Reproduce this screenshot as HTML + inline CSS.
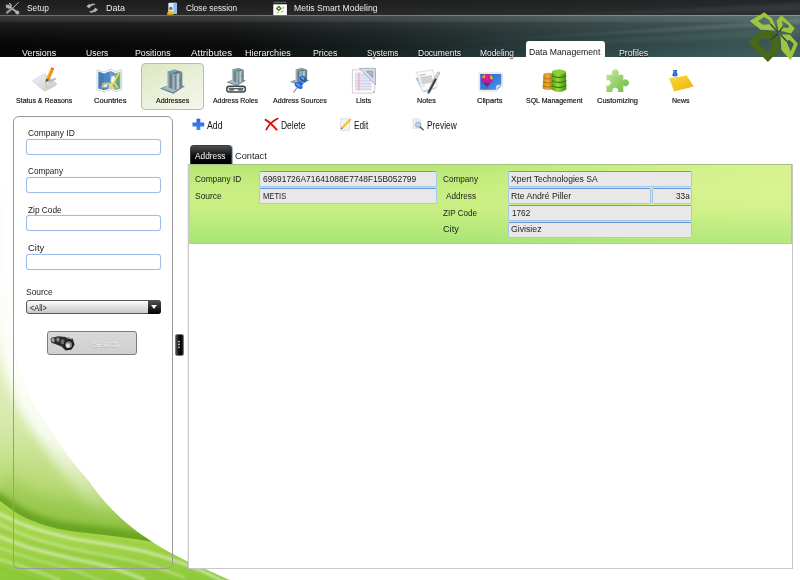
<!DOCTYPE html>
<html>
<head>
<meta charset="utf-8">
<title>Metis Smart Modeling</title>
<style>
html,body{margin:0;padding:0;}
body{width:800px;height:580px;overflow:hidden;position:relative;background:#fff;font-family:"Liberation Sans","DejaVu Sans",sans-serif;font-size:9px;color:#222;}
.t{position:absolute;display:block;white-space:nowrap;line-height:1;transform-origin:0 50%;color:#222;}
.tt{color:#ececec;}
.tab{color:#f4f4f4;text-shadow:0 1px 1px #000;}
.tabs{color:#111;}
.tl{color:#1a1a1a;-webkit-text-stroke:.2px #1a1a1a;}
.sr{color:#f7f7f3;text-shadow:0 1px 0 #b4b4aa,0 0 1px #aaa;}
.tb{color:#111;}
.at{color:#fff;}
#swoosh{position:absolute;left:0;top:0;width:800px;height:580px;}
#topbar{position:absolute;left:0;top:0;width:800px;height:16px;background:linear-gradient(90deg,rgba(0,0,0,0) 40%,rgba(60,80,80,.22) 100%),linear-gradient(#1c1c1c,#2a2a2a);}
#header{position:absolute;left:0;top:15px;width:800px;height:42px;
 background:
  linear-gradient(180deg,rgba(255,255,255,.42) 0px,rgba(255,255,255,.42) 1px,rgba(255,255,255,.22) 1.2px,rgba(255,255,255,.16) 7px,rgba(255,255,255,.10) 7.5px,rgba(255,255,255,.04) 20px,rgba(255,255,255,0) 32px),
  linear-gradient(180deg,rgba(0,0,0,.28) 0,rgba(0,0,0,.22) 40%,rgba(0,0,0,0) 100%),
  linear-gradient(90deg,#060606 0%,#0a0b0b 28%,#1a2424 48%,#2f4747 72%,#426464 100%);}
#tabsel{position:absolute;left:526px;top:41px;width:79px;height:17px;background:#fff;border-radius:3px 3px 0 0;}
#selbox{position:absolute;left:141px;top:63px;width:61px;height:45px;background:linear-gradient(155deg,#dbe7c0 0%,#e9f0d8 50%,#f5f7ee 100%);border:1px solid #b9bbb4;border-radius:4px;}
#lpanel{position:absolute;left:13px;top:116px;width:158px;height:451px;border:1px solid #9a9a9a;border-radius:6px;}
.li{position:absolute;left:26px;width:133px;height:14px;border:1px solid #9dbde8;border-radius:3px;background:#fff;box-shadow:0 0 1px #bcd3f2;}
#lsel{position:absolute;left:26px;top:300px;width:133px;height:12px;border:1px solid #555;border-radius:3px;background:linear-gradient(#fdfdfd,#dcdcdc 60%,#c8c8c8);}
#lsel i{position:absolute;right:-1px;top:-1px;width:13px;height:14px;background:linear-gradient(#555,#000);border-radius:0 3px 3px 0;}
#lsel i:after{content:"";position:absolute;left:3px;top:5px;border:3.5px solid transparent;border-top:4px solid #fff;border-bottom:0;}
#sbtn{position:absolute;left:47px;top:331px;width:88px;height:22px;border:1px solid #7c7c7c;border-radius:3px;background:linear-gradient(#d9d9d9,#cfcfcf);}
#split{position:absolute;left:175px;top:334px;width:7px;height:20px;border:1px solid #7a7a7a;background:linear-gradient(90deg,#4a4a4a,#0c0c0c 45%,#000 70%,#2a2a2a);border-radius:2px;}
#main{position:absolute;left:188px;top:164px;width:603px;height:404px;background:#fff;border:1px solid #c8c8c8;border-top:none;box-shadow:-1px 0 1px rgba(0,0,0,.06);}
#atab{position:absolute;left:190px;top:145px;width:40px;height:19px;background:linear-gradient(#4e4e4e,#2a2a2a 30%,#0a0a0a 55%,#000);border:1px solid #3c3c3c;border-bottom:none;border-radius:4px 4px 0 0;box-shadow:1px 0 0 rgba(120,145,165,.7);}
#green{position:absolute;left:189px;top:164px;width:603px;height:80px;border-top:1px solid #a6c27e;border-left:1px solid #b9e088;border-right:1px solid #a4d66a;border-bottom:1px solid #a2dc72;box-sizing:border-box;
 background:radial-gradient(ellipse 340px 62px at 100% 0%,rgba(232,247,160,.62) 0%,rgba(232,247,160,0) 100%),linear-gradient(90deg,rgba(255,255,170,0) 40%,rgba(240,250,160,.18) 100%),linear-gradient(180deg,#b5e774 0%,#c1eb7c 18%,#caef83 38%,#c8ee82 58%,#b5e97b 82%,#a8e475 100%);}
.gi{position:absolute;height:14px;border:1px solid #a6c6ec;border-top-color:#6698d6;border-radius:2px;background:#e8e8e8;}
</style>
</head>
<body>
<svg id="swoosh" viewBox="0 0 800 580">
<defs>
<linearGradient id="gLow" x1="0" y1="500" x2="0" y2="580" gradientUnits="userSpaceOnUse">
<stop offset="0" stop-color="#a9d852"/><stop offset=".5" stop-color="#a4d54c"/><stop offset="1" stop-color="#8ec93a"/></linearGradient>
<linearGradient id="gUp" x1="0" y1="120" x2="0" y2="545" gradientUnits="userSpaceOnUse">
<stop offset="0" stop-color="#ffffff"/><stop offset=".25" stop-color="#f3f8e2"/><stop offset=".55" stop-color="#e6f1c8"/><stop offset=".72" stop-color="#d6e9a8"/><stop offset=".86" stop-color="#b8da76"/><stop offset="1" stop-color="#8cc23c"/></linearGradient>
<linearGradient id="gHi" x1="0" y1="300" x2="0" y2="520" gradientUnits="userSpaceOnUse"><stop offset="0" stop-color="#fff" stop-opacity=".9"/><stop offset=".6" stop-color="#fff" stop-opacity=".85"/><stop offset="1" stop-color="#fff" stop-opacity="0"/></linearGradient>
<filter id="b5" filterUnits="userSpaceOnUse" x="-60" y="60" width="400" height="560"><feGaussianBlur stdDeviation="5"/></filter>
<filter id="b3" filterUnits="userSpaceOnUse" x="-60" y="60" width="400" height="560"><feGaussianBlur stdDeviation="3"/></filter>
<filter id="b8" filterUnits="userSpaceOnUse" x="-60" y="60" width="400" height="560"><feGaussianBlur stdDeviation="8"/></filter>
<filter id="b1" filterUnits="userSpaceOnUse" x="-60" y="60" width="400" height="560"><feGaussianBlur stdDeviation="1.2"/></filter>
<clipPath id="cP"><path d="M0.0,120.0 C0.2,128.3 0.5,153.3 1.0,170.0 C1.5,186.7 2.2,203.3 3.0,220.0 C3.8,236.7 4.5,254.2 5.6,270.0 C6.7,285.8 7.5,300.0 9.4,315.0 C11.3,330.0 13.1,345.8 16.8,360.0 C20.5,374.2 25.9,388.3 31.5,400.0 C37.1,411.7 44.4,420.7 50.5,430.0 C56.6,439.3 62.2,448.2 68.0,456.0 C73.8,463.8 79.5,469.6 85.0,476.5 C90.5,483.4 95.6,491.1 101.0,497.5 C106.4,503.9 111.8,509.6 117.5,515.0 C123.2,520.4 129.2,525.5 135.0,530.0 C140.8,534.5 146.7,538.2 152.5,542.0 C158.3,545.8 164.2,549.4 170.0,552.6 C175.8,555.8 181.7,558.7 187.5,561.4 C193.3,564.1 198.0,565.9 205.0,569.0 C212.0,572.1 225.4,578.2 229.5,580.0 L229.5,590 L-10,590 L-10,120 Z"/></clipPath>
<clipPath id="cU"><path d="M0.0,120.0 C0.2,128.3 0.5,153.3 1.0,170.0 C1.5,186.7 2.2,203.3 3.0,220.0 C3.8,236.7 4.5,254.2 5.6,270.0 C6.7,285.8 7.5,300.0 9.4,315.0 C11.3,330.0 13.1,345.8 16.8,360.0 C20.5,374.2 25.9,388.3 31.5,400.0 C37.1,411.7 44.4,420.7 50.5,430.0 C56.6,439.3 62.2,448.2 68.0,456.0 C73.8,463.8 79.5,469.6 85.0,476.5 C90.5,483.4 95.6,491.1 101.0,497.5 C106.4,503.9 111.8,509.6 117.5,515.0 C123.2,520.4 129.2,525.5 135.0,530.0 C140.8,534.5 149.6,540.0 152.5,542.0 C149.6,541.5 140.4,539.8 135.0,539.0 C129.6,538.2 125.8,537.8 120.0,537.0 C114.2,536.2 106.2,535.2 100.0,534.5 C93.8,533.8 89.3,533.3 83.0,532.5 C76.7,531.7 69.0,530.9 62.0,529.5 C55.0,528.1 48.0,526.4 41.0,524.0 C34.0,521.6 26.8,518.8 20.0,515.0 C13.2,511.2 4.2,503.8 0.0,501.0 C-4.2,498.2 -4.2,498.5 -5.0,498.0 L-10,498 L-10,120 Z"/></clipPath>
</defs>
<g clip-path="url(#cP)">
<rect x="-10" y="480" width="260" height="110" fill="url(#gLow)"/>
<g filter="url(#b1)">
<path d="M-5.0,512.0 C0.8,514.5 17.5,522.7 30.0,527.0 C42.5,531.3 56.7,535.0 70.0,538.0 C83.3,541.0 96.7,542.5 110.0,545.0 C123.3,547.5 136.7,549.5 150.0,553.0 C163.3,556.5 177.5,561.2 190.0,566.0 C202.5,570.8 219.2,579.3 225.0,582.0" fill="none" stroke="#fff" stroke-width="3.0" stroke-opacity="0.45"/>
<path d="M-5.0,522.0 C0.8,524.5 17.5,532.7 30.0,537.0 C42.5,541.3 56.7,544.8 70.0,548.0 C83.3,551.2 96.7,553.2 110.0,556.0 C123.3,558.8 137.5,561.3 150.0,565.0 C162.5,568.7 179.2,575.8 185.0,578.0" fill="none" stroke="#fff" stroke-width="2.0" stroke-opacity="0.35"/>
<path d="M-5.0,535.0 C0.8,537.2 17.5,544.2 30.0,548.0 C42.5,551.8 56.7,554.8 70.0,558.0 C83.3,561.2 97.5,563.3 110.0,567.0 C122.5,570.7 139.2,577.8 145.0,580.0" fill="none" stroke="#fff" stroke-width="3.5" stroke-opacity="0.40"/>
<path d="M-5.0,546.0 C0.8,548.0 17.5,554.2 30.0,558.0 C42.5,561.8 57.5,565.0 70.0,569.0 C82.5,573.0 99.2,579.8 105.0,582.0" fill="none" stroke="#fff" stroke-width="2.0" stroke-opacity="0.30"/>
<path d="M-5.0,558.0 C0.8,559.8 19.2,565.3 30.0,569.0 C40.8,572.7 55.0,578.2 60.0,580.0" fill="none" stroke="#fff" stroke-width="3.0" stroke-opacity="0.30"/>
<path d="M-5.0,505.0 C0.8,507.7 17.5,516.5 30.0,521.0 C42.5,525.5 56.7,529.0 70.0,532.0 C83.3,535.0 96.7,536.5 110.0,539.0 C123.3,541.5 136.7,543.5 150.0,547.0 C163.3,550.5 176.8,554.5 190.0,560.0 C203.2,565.5 222.5,576.7 229.0,580.0" fill="none" stroke="#86c030" stroke-width="2.5" stroke-opacity="0.25"/>
<path d="M-5.0,528.0 C0.8,530.3 17.5,537.8 30.0,542.0 C42.5,546.2 56.7,549.8 70.0,553.0 C83.3,556.2 96.7,558.0 110.0,561.0 C123.3,564.0 139.2,567.5 150.0,571.0 C160.8,574.5 170.8,580.2 175.0,582.0" fill="none" stroke="#86c030" stroke-width="3.0" stroke-opacity="0.30"/>
<path d="M-5.0,567.0 C0.8,568.8 22.5,575.5 30.0,578.0 C37.5,580.5 38.3,581.3 40.0,582.0" fill="none" stroke="#7cbc2c" stroke-width="4.0" stroke-opacity="0.30"/>
</g>
</g>
<g clip-path="url(#cU)">
<path d="M0.0,120.0 C0.2,128.3 0.5,153.3 1.0,170.0 C1.5,186.7 2.2,203.3 3.0,220.0 C3.8,236.7 4.5,254.2 5.6,270.0 C6.7,285.8 7.5,300.0 9.4,315.0 C11.3,330.0 13.1,345.8 16.8,360.0 C20.5,374.2 25.9,388.3 31.5,400.0 C37.1,411.7 44.4,420.7 50.5,430.0 C56.6,439.3 62.2,448.2 68.0,456.0 C73.8,463.8 79.5,469.6 85.0,476.5 C90.5,483.4 95.6,491.1 101.0,497.5 C106.4,503.9 111.8,509.6 117.5,515.0 C123.2,520.4 129.2,525.5 135.0,530.0 C140.8,534.5 149.6,540.0 152.5,542.0 C149.6,541.5 140.4,539.8 135.0,539.0 C129.6,538.2 125.8,537.8 120.0,537.0 C114.2,536.2 106.2,535.2 100.0,534.5 C93.8,533.8 89.3,533.3 83.0,532.5 C76.7,531.7 69.0,530.9 62.0,529.5 C55.0,528.1 48.0,526.4 41.0,524.0 C34.0,521.6 26.8,518.8 20.0,515.0 C13.2,511.2 4.2,503.8 0.0,501.0 C-4.2,498.2 -4.2,498.5 -5.0,498.0 L-10,498 L-10,120 Z" fill="url(#gUp)"/>
<path d="M-5.0,498.0 C-4.2,498.5 -4.2,498.2 0.0,501.0 C4.2,503.8 13.2,511.2 20.0,515.0 C26.8,518.8 34.0,521.6 41.0,524.0 C48.0,526.4 55.0,528.1 62.0,529.5 C69.0,530.9 76.7,531.7 83.0,532.5 C89.3,533.3 93.8,533.8 100.0,534.5 C106.2,535.2 114.2,536.2 120.0,537.0 C125.8,537.8 129.6,538.2 135.0,539.0 C140.4,539.8 149.6,541.5 152.5,542.0" fill="none" stroke="#80ba2e" stroke-width="44" stroke-opacity=".38" filter="url(#b8)" transform="translate(0,-6)"/>
<path d="M-5.0,498.0 C-4.2,498.5 -4.2,498.2 0.0,501.0 C4.2,503.8 13.2,511.2 20.0,515.0 C26.8,518.8 34.0,521.6 41.0,524.0 C48.0,526.4 55.0,528.1 62.0,529.5 C69.0,530.9 76.7,531.7 83.0,532.5 C89.3,533.3 93.8,533.8 100.0,534.5 C106.2,535.2 114.2,536.2 120.0,537.0 C125.8,537.8 129.6,538.2 135.0,539.0 C140.4,539.8 149.6,541.5 152.5,542.0" fill="none" stroke="#5f9c1a" stroke-width="11" stroke-opacity=".85" filter="url(#b3)" transform="translate(0,-2)"/>
<path d="M0.0,120.0 C0.2,128.3 0.5,153.3 1.0,170.0 C1.5,186.7 2.2,203.3 3.0,220.0 C3.8,236.7 4.5,254.2 5.6,270.0 C6.7,285.8 7.5,300.0 9.4,315.0 C11.3,330.0 13.1,345.8 16.8,360.0 C20.5,374.2 25.9,388.3 31.5,400.0 C37.1,411.7 44.4,420.7 50.5,430.0 C56.6,439.3 62.2,448.2 68.0,456.0 C73.8,463.8 79.5,469.6 85.0,476.5 C90.5,483.4 95.6,491.1 101.0,497.5 C106.4,503.9 111.8,509.6 117.5,515.0 C123.2,520.4 129.2,525.5 135.0,530.0 C140.8,534.5 146.7,538.2 152.5,542.0 C158.3,545.8 164.2,549.4 170.0,552.6 C175.8,555.8 181.7,558.7 187.5,561.4 C193.3,564.1 198.0,565.9 205.0,569.0 C212.0,572.1 225.4,578.2 229.5,580.0" fill="none" stroke="url(#gHi)" stroke-width="30" filter="url(#b5)"/>
</g>
</svg>
<div id="topbar"></div>
<div id="header"></div>
<svg id="streaks" style="position:absolute;left:0;top:0" width="800" height="57" viewBox="0 0 800 57">
<defs><filter id="sb" filterUnits="userSpaceOnUse" x="0" y="0" width="800" height="57"><feGaussianBlur stdDeviation="1.2"/></filter>
<linearGradient id="sg" x1="380" y1="0" x2="800" y2="0" gradientUnits="userSpaceOnUse"><stop offset="0" stop-color="#cfe0e0" stop-opacity="0"/><stop offset=".5" stop-color="#cfe0e0" stop-opacity=".5"/><stop offset="1" stop-color="#cfe0e0" stop-opacity="1"/></linearGradient></defs>
<g filter="url(#sb)" fill="url(#sg)">
<path d="M800,19 L800,25 L440,43 Z" fill-opacity=".16"/>
<path d="M800,27 L800,36 L400,52 Z" fill-opacity=".08"/>
<path d="M800,3 L800,10 L540,15.5 Z" fill-opacity=".07"/>
</g></svg>
<div id="tabsel"></div>
<svg style="position:absolute;left:740px;top:5px" width="60" height="60" viewBox="740 5 60 60">
<path fill="#9cc63c" fill-rule="evenodd" d="M749.8,21 L764.3,12.2 L772.1,18.4 L777.4,31.6 L774.5,30.4 L760.7,29.8 Z M758.1,21 L764.3,16.9 L769.5,20.5 L771,24.3 L762.8,24.7 Z"/>
<path fill="#9cc63c" fill-rule="evenodd" d="M776.7,20.5 L781.4,15.3 L788.6,22.1 L794.8,28.3 L791.2,33.4 L781.4,30.9 L778.6,31.8 Z M781.9,20.5 L789.1,25.7 L787.6,28.3 L782.9,26.7 Z"/>
<path fill="#476915" fill-rule="evenodd" d="M748.3,42.2 L760.7,31.4 L774.1,32.4 L777.8,34.2 L779.8,49.5 L767.9,61.9 Z M757.1,42.8 L762.2,38.1 L771,39.1 L772.1,47.4 L767.4,52.6 Z"/>
<path fill="#9cc63c" fill-rule="evenodd" d="M780.3,34.5 L789.7,34.5 L797.9,43.8 L790.7,60.3 L781.4,50 Z M786.6,41.7 L789.1,39.7 L793.8,43.8 L790.7,51.6 Z"/>
<g stroke="#2e4243" stroke-width="1.4" fill="none" stroke-linecap="butt">
<path d="M770.6,24.2 L778,32.2"/><path d="M783,26.6 L779,32"/><path d="M771.2,39.4 L778,33.6"/><path d="M787,41.4 L780.6,34.8"/>
</g>
</svg>

<div id="selbox"></div>
<div id="lpanel"></div>
<div class="li" style="top:139px"></div>
<div class="li" style="top:177px"></div>
<div class="li" style="top:215px"></div>
<div class="li" style="top:254px"></div>
<div id="lsel"><i></i></div>
<div id="sbtn"></div>
<div id="split"></div>
<div id="main"></div>
<div id="atab"></div>
<div id="green"></div>
<div class="gi" style="left:259px;top:171px;width:176px"></div>
<div class="gi" style="left:259px;top:188px;width:176px"></div>
<div class="gi" style="left:508px;top:171px;width:182px"></div>
<div class="gi" style="left:508px;top:188px;width:141px"></div>
<div class="gi" style="left:652px;top:188px;width:38px"></div>
<div class="gi" style="left:508px;top:205px;width:182px"></div>
<div class="gi" style="left:508px;top:222px;width:182px"></div>
<svg id="icons" style="position:absolute;left:0;top:0" width="800" height="580" viewBox="0 0 800 580">
<defs>
<linearGradient id="gSteel" x1="0" y1="0" x2="1" y2="0"><stop offset="0" stop-color="#dfe5e8"/><stop offset=".3" stop-color="#7d929b"/><stop offset=".55" stop-color="#5f7883"/><stop offset=".8" stop-color="#a9b7bd"/><stop offset="1" stop-color="#8a9da5"/></linearGradient>
<linearGradient id="gPad" x1="0" y1="0" x2="1" y2="1"><stop offset="0" stop-color="#f4f6f8"/><stop offset="1" stop-color="#bcc6cf"/></linearGradient>
<linearGradient id="gPuz" x1="0" y1="0" x2="1" y2="1"><stop offset="0" stop-color="#c6e9a8"/><stop offset="1" stop-color="#6cba36"/></linearGradient>
<linearGradient id="gNote" x1="0" y1="0" x2="1" y2="1"><stop offset="0" stop-color="#fbd83a"/><stop offset="1" stop-color="#e9b50e"/></linearGradient>
<linearGradient id="gGreenCyl" x1="0" y1="0" x2="1" y2="0"><stop offset="0" stop-color="#55a012"/><stop offset=".4" stop-color="#9ad63e"/><stop offset="1" stop-color="#478e0e"/></linearGradient>
<linearGradient id="gOrCyl" x1="0" y1="0" x2="1" y2="0"><stop offset="0" stop-color="#cf8616"/><stop offset=".45" stop-color="#e8ac3c"/><stop offset="1" stop-color="#bf7a12"/></linearGradient>
<linearGradient id="gSky" x1="0" y1="0" x2="1" y2="1"><stop offset="0" stop-color="#1f62d2"/><stop offset="1" stop-color="#4a98e6"/></linearGradient>
<linearGradient id="gPlus" x1="0" y1="0" x2="0" y2="1"><stop offset="0" stop-color="#2a5fe0"/><stop offset="1" stop-color="#3f8cf2"/></linearGradient>
<filter id="ib" filterUnits="userSpaceOnUse" x="0" y="0" width="800" height="140"><feGaussianBlur stdDeviation=".35"/></filter>

</defs>
<g filter="url(#ib)">
<!-- Status & Reasons -->
<path d="M32.4,80.9 Q33,79.6 45,73.7 L57,84 Q56.6,85.6 44.5,91.2 Z" fill="url(#gPad)" stroke="#c3ccd4" stroke-width=".6"/>
<path d="M48,80.5 L55.5,77.8 L56.5,79.6 L49,82.4 Z" fill="#a9aeb4" fill-opacity=".8"/>
<path d="M45.6,82.2 L46.2,78.6 L50.6,68.6 L53.6,69.9 L49.2,79.9 Z" fill="#f6b21c"/>
<path d="M47.6,79.2 L52,69.2 L53.6,69.9 L49.2,79.9 Z" fill="#e88a12"/>
<path d="M50.6,68.6 L51.3,67.2 L54.2,68.5 L53.6,69.9 Z" fill="#d8572a"/>
<path d="M45.6,82.2 L46.2,78.6 L49.2,79.9 Z" fill="#5a4a30"/>
<path d="M45.6,82.4 L46.8,88.5" stroke="#e8b84a" stroke-width=".9" stroke-opacity=".7"/>
<!-- Countries -->
<path d="M97,70 L104,72 L111,69.4 L116,71.6 L121.6,69.6 L121.6,89.6 L116,91.6 L111,89.6 L104,91.8 L97,89.8 Z" fill="#fff" stroke="#c9c9c9" stroke-width=".8"/>
<path d="M98.3,71.6 L104,73.4 L104,90.2 L98.3,88.4 Z" fill="#3f7fb9"/>
<path d="M104,73.4 L110.6,71 L110.6,88.2 L104,90.2 Z" fill="#4b8ac3"/>
<path d="M110.6,71 L115.8,73.2 L115.8,90 L110.6,88.2 Z" fill="#5b9bd2"/>
<path d="M111.4,76.6 L114.2,75.4 L115.6,78.8 L113,84.4 L111,82 Z" fill="#eef4f8"/>
<path d="M115.8,73.2 L120.4,71.4 L120.4,88.4 L115.8,90 Z" fill="#6fae74"/>
<path d="M103.4,84.4 L108,84 L107,87.2 L103,87.6 Z" fill="#e4e8ee"/>
<path d="M101.6,88.6 L103,83.4 L108.8,83 L110.6,86.4" fill="none" stroke="#e3b64a" stroke-width="1.4"/>
<path d="M109,84.6 L114.4,88.8 M108.6,88.4 L112.6,84.4" stroke="#f0e060" stroke-width="2"/>
<path d="M118,74 Q116.6,80 118.6,86" fill="none" stroke="#4b8ac3" stroke-width=".8"/>
<path d="M119.4,72.4 L113.6,82.6 L108.6,85.4 M113.6,82.6 L117.6,87.6" fill="none" stroke="#efe05a" stroke-width="1.6"/>
<!-- Addresses -->
<g transform="translate(160,69.2)">
 <path d="M0,19.4 L10,15.2 L25,16.8 L13.4,24.6 Z" fill="#4f7686"/>
 <path d="M1.6,19.1 L10,15.8 L23.2,17 L13.3,23.2 Z" fill="#a4b8c1"/>
 <path d="M6.6,2.8 L15,5.6 L15,20.8 L6.6,17.6 Z" fill="url(#gSteel)"/>
 <path d="M15,5.6 L22.3,2.7 L22.3,18.2 L15,20.8 Z" fill="#6d858f"/>
 <path d="M16.6,5 L19.4,3.9 L19.4,19.2 L16.6,20.2 Z" fill="#d3dadd" fill-opacity=".8"/>
 <path d="M6.6,2.8 L14.6,0.3 L22.3,2.7 L15,5.6 Z" fill="#56808f"/>
 <path d="M8.6,2.7 L14.6,0.9 L18,2 L12,3.9 Z" fill="#86a5b0"/>
 <rect x="19" y="10" width="1.6" height="2.4" fill="#4f86b0"/>
</g>
<!-- Address Roles -->
<g transform="translate(226.6,67.8) scale(.77,.74)">
 <path d="M0,19.4 L10,15.2 L25,16.8 L13.4,24.6 Z" fill="#4f7686"/>
 <path d="M1.6,19.1 L10,15.8 L23.2,17 L13.3,23.2 Z" fill="#a4b8c1"/>
 <path d="M6.6,2.8 L15,5.6 L15,20.8 L6.6,17.6 Z" fill="url(#gSteel)"/>
 <path d="M15,5.6 L22.3,2.7 L22.3,18.2 L15,20.8 Z" fill="#6d858f"/>
 <path d="M16.6,5 L19.4,3.9 L19.4,19.2 L16.6,20.2 Z" fill="#d3dadd" fill-opacity=".8"/>
 <path d="M6.6,2.8 L14.6,0.3 L22.3,2.7 L15,5.6 Z" fill="#56808f"/>
 <path d="M8.6,2.7 L14.6,0.9 L18,2 L12,3.9 Z" fill="#86a5b0"/>
 <rect x="19" y="10" width="1.6" height="2.4" fill="#4f86b0"/>
</g>
<rect x="226.8" y="86.2" width="18.6" height="5.8" rx="2.4" fill="#f1f1f1" stroke="#454545" stroke-width="1.5"/>
<path d="M228.4,87.8 L234,87.8 Q235.4,90.8 232.4,90.8 L229.6,90.8 Z M243.8,87.8 L238.2,87.8 Q236.8,90.8 239.8,90.8 L242.6,90.8 Z" fill="#5d6a70"/>
<path d="M234,88.6 H238.2" stroke="#454545" stroke-width="1"/>
<!-- Address Sources -->
<g transform="translate(290.2,67.8) scale(.76,.72)">
 <path d="M0,19.4 L10,15.2 L25,16.8 L13.4,24.6 Z" fill="#4f7686"/>
 <path d="M1.6,19.1 L10,15.8 L23.2,17 L13.3,23.2 Z" fill="#a4b8c1"/>
 <path d="M6.6,2.8 L15,5.6 L15,20.8 L6.6,17.6 Z" fill="url(#gSteel)"/>
 <path d="M15,5.6 L22.3,2.7 L22.3,18.2 L15,20.8 Z" fill="#6d858f"/>
 <path d="M16.6,5 L19.4,3.9 L19.4,19.2 L16.6,20.2 Z" fill="#d3dadd" fill-opacity=".8"/>
 <path d="M6.6,2.8 L14.6,0.3 L22.3,2.7 L15,5.6 Z" fill="#56808f"/>
 <path d="M8.6,2.7 L14.6,0.9 L18,2 L12,3.9 Z" fill="#86a5b0"/>
 <rect x="19" y="10" width="1.6" height="2.4" fill="#4f86b0"/>
</g>
<path d="M293.4,92.4 L297.4,87.4" stroke="#8e8e8e" stroke-width="1.1"/>
<path d="M299.8,80.4 L303.4,83.6 L301,87 L296.4,84.4 Z" fill="#2a6bd6"/>
<ellipse cx="303" cy="78.9" rx="3.6" ry="2.6" transform="rotate(38 303 78.9)" fill="#1d58c8"/>
<ellipse cx="302.7" cy="78.2" rx="2" ry="1.1" transform="rotate(38 302.7 78.2)" fill="#6aa2f2"/>
<ellipse cx="298.6" cy="85.6" rx="4.5" ry="2.5" transform="rotate(36 298.6 85.6)" fill="#2568d8"/>
<ellipse cx="298.2" cy="85" rx="2.8" ry="1.1" transform="rotate(36 298.2 85)" fill="#5c98ee"/>
<!-- Lists -->
<path d="M352.4,69.8 L374.8,69.8 L374.8,90.4 L372,93.2 L352.4,93.2 Z" fill="#fbfbfb" stroke="#c6c6c6" stroke-width=".8"/>
<rect x="355" y="72.4" width="16.6" height="18" fill="#e6e8f5"/>
<path d="M355,75.2 H371.6 M355,78 H371.6 M355,80.8 H371.6 M355,83.6 H371.6 M355,86.4 H371.6 M355,89.2 H371.6" stroke="#c3c7e2" stroke-width=".7"/>
<path d="M358.9,72.4 V90.4" stroke="#f3aeb4" stroke-width="1.3"/>
<path d="M359.3,68.3 L375.5,68.3 L375.5,84.8 Z" fill="#d9dce6" stroke="#9298ae" stroke-width=".7"/>
<path d="M366.4,71.2 L372.8,71.2 L372.8,77.8 Z" fill="#aeb4c8" stroke="#7f87a2" stroke-width=".6"/>
<path d="M372.6,93 L375,90.6 L375,93 Z" fill="#bdbdbd"/>
<!-- Notes -->
<path d="M415.3,77.9 L430,74 L436,88.4 L423.6,92.6 Z" fill="#9fcdf0"/>
<path d="M416.7,72.4 L432.6,69.7 L437.4,86.9 L422.2,91.4 Z" fill="#fbfbfb" stroke="#d0d0d0" stroke-width=".7"/>
<path d="M419.6,75.4 L425.6,74.4" stroke="#9a9a9a" stroke-width=".8"/>
<path d="M420,77 L431.6,75 L433.4,82.2 L421.8,84.4 Z" fill="#d2d2d2"/>
<path d="M422.4,86.2 L425,85.7" stroke="#b0b0b0" stroke-width=".7"/>
<path d="M438.4,73.2 L428.6,92.4" stroke="#8e969e" stroke-width="3" stroke-linecap="round"/>
<path d="M436.6,77.6 L429,92" stroke="#2e3338" stroke-width="1.5" stroke-linecap="round"/>
<path d="M438.4,73.2 L436.2,77.6" stroke="#c7d2dc" stroke-width="2.6" stroke-linecap="round"/>
<!-- Cliparts -->
<rect x="479" y="72.8" width="23.5" height="18.2" rx="1" fill="#f4f2ee" stroke="#d8d4cc" stroke-width=".6"/>
<rect x="480.2" y="74" width="21.1" height="15.8" fill="url(#gSky)"/>
<ellipse cx="487.2" cy="79" rx="6" ry="5" fill="#c21c9a"/>
<path d="M481.6,77.4 Q482.6,74.6 485.4,74.4 L485,78.6 Z" fill="#e8a020"/>
<path d="M485.6,74.3 Q487.4,74 489,74.6 L488,80 L485.4,80 Z" fill="#d8208c"/>
<path d="M490,74.8 Q492.8,75.8 493.2,79 L490.4,79.6 Z" fill="#c8c030"/>
<path d="M483,82.6 L485.8,86.2 L487.8,86.2 L490.8,83 Z" fill="#6a2a8c"/>
<rect x="485.4" y="86.6" width="2.2" height="2" fill="#8a5a20"/>
<path d="M502.6,84.4 L502.6,91.2 L495.8,91.2 Z" fill="#fff"/>
<path d="M495.8,91 Q497.6,86.4 502.4,84.6 Q498.6,85 496.6,85.6 Z" fill="#f2f2f2" stroke="#d0d0d0" stroke-width=".4"/>
<!-- SQL Management -->
<path d="M543.4,74 Q548,71.4 552.8,74 L553.4,88.6 Q548,91.6 542.6,88.6 Z" fill="url(#gOrCyl)"/>
<path d="M543.3,78 Q548,80.2 552.9,78 M543.1,82 Q548,84.2 553.1,82 M542.9,86 Q548,88.2 553.3,86" fill="none" stroke="#a86408" stroke-width=".8"/>
<path d="M551.8,72 Q559,67.6 566,72 L566.4,89.6 Q559,94.6 551.6,89.6 Z" fill="url(#gGreenCyl)"/>
<ellipse cx="558.9" cy="71.8" rx="7.1" ry="2.3" fill="#8ad038"/>
<path d="M551.8,75.6 Q559,79.4 566.1,75.6 M551.7,80.6 Q559,84.4 566.2,80.6 M551.7,85.6 Q559,89.4 566.3,85.6" fill="none" stroke="#2b6f08" stroke-width="1"/>
<!-- Customizing -->
<path d="M606.4,74.8 L612.6,74.8 A3.4,3.4 0 1 1 618,74.8 L623.3,74.8 L623.3,80.2 A3.4,3.4 0 1 1 623.3,85.4 L623.3,92.1 L618,92.1 A3,3 0 1 0 612.6,92.1 L606.4,92.1 L606.4,85.2 A2.8,2.8 0 1 0 606.4,80.4 Z" fill="url(#gPuz)"/>
<!-- News -->
<path d="M669,77.9 L684.6,76 Q686,74.6 686.6,75.5 L693.8,86.6 L674.2,91.4 Z" fill="url(#gNote)"/>
<path d="M675,76.4 L675.6,80.4" stroke="#d8d8d8" stroke-width="1"/>
<path d="M673,70 L677.2,70 L676.6,71.6 L677.8,75.4 Q675,77.4 672.2,75.6 L673.6,71.6 Z" fill="#1f5fc8"/>
<path d="M674.6,70.4 L675.4,75.8" stroke="#5a96ec" stroke-width=".9"/>
</g>
<!-- top bar icons -->
<g fill="none" stroke="#b4b4b4" stroke-linecap="round">
<path d="M8,5.6 L17.4,12.6" stroke-width="1.9"/>
<path d="M6.6,5.2 A2.2,2.2 0 1 0 9.6,3.6" stroke-width="1.5"/>
<circle cx="17.3" cy="12.5" r="1.4" stroke-width="1.2"/>
<path d="M18.4,2.6 L12.4,8.4" stroke-width="1"/>
<path d="M11.6,8.8 L7,12.6" stroke-width="2.2" stroke="#9a9a9a"/>
</g>
<g fill="#b8b8b8">
<path d="M86.4,6.4 L89.6,3.6 L89.6,5 Q93.4,2 95.6,4.6 Q93,4.4 89.8,7.2 L89.8,8.6 Z"/>
<path d="M98,9.6 L94.8,12.6 L94.8,11.2 Q91,14 88.8,11.6 Q91.4,11.8 94.6,9 L94.6,7.6 Z"/>
</g>
<rect x="168.3" y="2.8" width="8.6" height="11.2" rx="1" fill="#dcecfa"/>
<rect x="173.4" y="2.8" width="3.5" height="11.2" fill="#8ec0ee"/>
<circle cx="170.8" cy="8.4" r="1.7" fill="#9a6a40"/>
<path d="M167,14.8 L167.6,11.8 Q170.4,10 173,11.8 L173.4,14.8 Z" fill="#f1b90a"/>
<path d="M273.4,2.3 H286.4" stroke="#8a8a8a" stroke-width=".7"/>
<rect x="273.3" y="4.3" width="13.6" height="10.7" fill="#fff"/>
<path d="M278.8,5.6 L281.8,8.4 L278.8,11.2 L275.8,8.4 Z M278.8,7.2 L277.6,8.4 L278.8,9.6 L280,8.4 Z" fill="#3f6a12" fill-rule="evenodd"/>
<path d="M282.6,6 L284.6,7.4 L283,9.4 Z M284,10 L282,12.6 L280.4,11.6 Z M276.4,12 L279.4,12 L278,13.6 Z" fill="#96c83c"/>
<!-- action icons -->
<path d="M196.5,118.8 H200.3 V122.6 H204.2 V126.5 H200.3 V130 H196.5 V126.5 H192.5 V122.6 H196.5 Z" fill="url(#gPlus)"/>
<path d="M265.6,119.8 Q270,122 276.6,129.6" fill="none" stroke="#d41414" stroke-width="2" stroke-linecap="round"/>
<path d="M277.8,118.6 Q270.4,122 266.2,129.6" fill="none" stroke="#cc1010" stroke-width="1.7" stroke-linecap="round"/>
<rect x="340.4" y="118.8" width="9.2" height="11.6" fill="#f1f1f1" stroke="#d2d2d2" stroke-width=".6"/>
<path d="M350,120 L342.2,127.8" stroke="#eec22a" stroke-width="2"/>
<path d="M350.8,119.2 L350,120" stroke="#e89a8a" stroke-width="2"/>
<path d="M342.2,127.8 L341.2,128.8" stroke="#7a5a30" stroke-width="1.4"/>
<path d="M413,118.4 L418.6,118.4 L420.8,120.6 L420.8,128.6 L413,128.6 Z" fill="#ececec" stroke="#d4d4d4" stroke-width=".5"/>
<circle cx="418.1" cy="124.8" r="2.6" fill="#c0d4ee" stroke="#8caad4" stroke-width=".9"/>
<path d="M420.2,127 L423.2,129.8" stroke="#555" stroke-width="1.4" stroke-linecap="round"/>
<!-- binoculars -->
<g>
<path d="M51.4,338.2 L58,336.2 L66,337 L72.6,338.4 L74.6,344.6 L71.6,349.6 L65.6,350.4 L61.4,346.4 L56.4,344.6 L51,342.4 Z" fill="#2b2b2b"/>
<ellipse cx="53" cy="340" rx="2" ry="2.5" transform="rotate(-15 53 340)" fill="#a2a2a2" stroke="#3a3a3a" stroke-width=".7"/>
<ellipse cx="58" cy="339.6" rx="1.9" ry="2.4" transform="rotate(-15 58 339.6)" fill="#8e8e8e" stroke="#3a3a3a" stroke-width=".7"/>
<ellipse cx="62.6" cy="341.8" rx="2.6" ry="3.1" fill="#6e6e6e" stroke="#1c1c1c" stroke-width=".9"/>
<circle cx="68.6" cy="344.8" r="4.2" fill="#7c7c7c" stroke="#161616" stroke-width="1.3"/>
<ellipse cx="68" cy="345.6" rx="2" ry="2.3" fill="#e4e4e4"/>
<path d="M66,337.4 L72,338.8" stroke="#c8c8c8" stroke-width=".9"/>
</g>
<!-- splitter dots -->
<g fill="#f2f2f2"><circle cx="179" cy="341.6" r=".8"/><circle cx="179" cy="344.4" r=".8"/><circle cx="179" cy="347.2" r=".8"/></g>
</svg>

<span class="t tt" style="left:26.80px;top:3.81px;font-size:9.20px;transform:scaleX(0.9119)">Setup</span>
<span class="t tt" style="left:106.00px;top:3.81px;font-size:9.20px;transform:scaleX(0.9783)">Data</span>
<span class="t tt" style="left:185.75px;top:3.81px;font-size:9.20px;transform:scaleX(0.8942)">Close session</span>
<span class="t tt" style="left:293.80px;top:3.81px;font-size:9.20px;transform:scaleX(0.9399)">Metis Smart Modeling</span>
<span class="t tab" style="left:21.90px;top:48.05px;font-size:9.63px;transform:scaleX(0.9263)">Versions</span>
<span class="t tab" style="left:85.50px;top:48.05px;font-size:9.63px;transform:scaleX(0.8850)">Users</span>
<span class="t tab" style="left:135.40px;top:48.05px;font-size:9.63px;transform:scaleX(0.9114)">Positions</span>
<span class="t tab" style="left:190.60px;top:48.05px;font-size:9.63px;transform:scaleX(1.0081)">Attributes</span>
<span class="t tab" style="left:245.20px;top:48.05px;font-size:9.63px;transform:scaleX(0.9386)">Hierarchies</span>
<span class="t tab" style="left:312.80px;top:48.05px;font-size:9.63px;transform:scaleX(0.9121)">Prices</span>
<span class="t tab" style="left:367.00px;top:48.05px;font-size:9.63px;transform:scaleX(0.8508)">Systems</span>
<span class="t tab" style="left:418.00px;top:48.05px;font-size:9.63px;transform:scaleX(0.8832)">Documents</span>
<span class="t tab" style="left:480.00px;top:48.05px;font-size:9.63px;transform:scaleX(0.8704)">Modeling</span>
<span class="t tab" style="left:618.80px;top:48.05px;font-size:9.63px;transform:scaleX(0.9094)">Profiles</span>
<span class="t tabs" style="left:529.00px;top:47.47px;font-size:9.84px;transform:scaleX(0.8818)">Data Management</span>
<span class="t tl" style="left:16.25px;top:97.46px;font-size:7.49px;transform:scaleX(0.9387)">Status &amp; Reasons</span>
<span class="t tl" style="left:94.25px;top:97.46px;font-size:7.49px;transform:scaleX(1.0141)">Countries</span>
<span class="t tl" style="left:155.50px;top:97.46px;font-size:7.49px;transform:scaleX(0.9399)">Addresses</span>
<span class="t tl" style="left:213.00px;top:97.46px;font-size:7.49px;transform:scaleX(0.9246)">Address Roles</span>
<span class="t tl" style="left:272.50px;top:97.46px;font-size:7.49px;transform:scaleX(0.9430)">Address Sources</span>
<span class="t tl" style="left:355.50px;top:97.46px;font-size:7.49px;transform:scaleX(0.9909)">Lists</span>
<span class="t tl" style="left:417.00px;top:97.46px;font-size:7.49px;transform:scaleX(0.9585)">Notes</span>
<span class="t tl" style="left:477.00px;top:97.46px;font-size:7.49px;transform:scaleX(1.0049)">Cliparts</span>
<span class="t tl" style="left:525.50px;top:97.46px;font-size:7.49px;transform:scaleX(0.9344)">SQL Management</span>
<span class="t tl" style="left:597.00px;top:97.46px;font-size:7.49px;transform:scaleX(0.9954)">Customizing</span>
<span class="t tl" style="left:672.00px;top:97.46px;font-size:7.49px;transform:scaleX(0.9349)">News</span>
<span class="t ll" style="left:27.50px;top:128.20px;font-size:9.63px;transform:scaleX(0.8738)">Company ID</span>
<span class="t ll" style="left:27.50px;top:166.20px;font-size:9.63px;transform:scaleX(0.8495)">Company</span>
<span class="t ll" style="left:27.50px;top:204.95px;font-size:9.63px;transform:scaleX(0.8640)">Zip Code</span>
<span class="t ll" style="left:27.50px;top:243.20px;font-size:9.63px;transform:scaleX(0.9802)">City</span>
<span class="t ll" style="left:25.75px;top:286.95px;font-size:9.63px;transform:scaleX(0.8770)">Source</span>
<span class="t ll" style="left:29.50px;top:303.54px;font-size:8.35px;transform:scaleX(0.8801)">&lt;All&gt;</span>
<span class="t sr" style="left:93.00px;top:338.52px;font-size:9.84px;transform:scaleX(0.8510)">Search</span>
<span class="t tb" style="left:206.75px;top:121.04px;font-size:10.11px;transform:scaleX(0.8626)">Add</span>
<span class="t tb" style="left:280.60px;top:121.04px;font-size:10.11px;transform:scaleX(0.8360)">Delete</span>
<span class="t tb" style="left:353.75px;top:121.04px;font-size:10.11px;transform:scaleX(0.8187)">Edit</span>
<span class="t tb" style="left:426.90px;top:121.04px;font-size:10.11px;transform:scaleX(0.8272)">Preview</span>
<span class="t at" style="left:194.50px;top:150.88px;font-size:9.42px;transform:scaleX(0.8837)">Address</span>
<span class="t ll" style="left:235.00px;top:151.38px;font-size:9.42px;transform:scaleX(0.9793)">Contact</span>
<span class="t ll" style="left:195.00px;top:174.20px;font-size:9.63px;transform:scaleX(0.8645)">Company ID</span>
<span class="t ll" style="left:195.00px;top:191.05px;font-size:9.63px;transform:scaleX(0.8770)">Source</span>
<span class="t ll" style="left:443.00px;top:174.45px;font-size:9.63px;transform:scaleX(0.8495)">Company</span>
<span class="t ll" style="left:446.25px;top:191.20px;font-size:9.63px;transform:scaleX(0.8496)">Address</span>
<span class="t ll" style="left:443.00px;top:207.95px;font-size:9.63px;transform:scaleX(0.8398)">ZIP Code</span>
<span class="t ll" style="left:443.00px;top:224.45px;font-size:9.63px;transform:scaleX(0.9500)">City</span>
<span class="t ll" style="left:262.80px;top:174.45px;font-size:9.63px;transform:scaleX(0.8753)">69691726A71641088E7748F15B052799</span>
<span class="t ll" style="left:262.80px;top:191.20px;font-size:9.63px;transform:scaleX(0.7885)">METIS</span>
<span class="t ll" style="left:511.25px;top:174.45px;font-size:9.63px;transform:scaleX(0.8923)">Xpert Technologies SA</span>
<span class="t ll" style="left:510.50px;top:191.20px;font-size:9.63px;transform:scaleX(0.9009)">Rte André Piller</span>
<span class="t ll" style="left:675.75px;top:191.20px;font-size:9.63px;transform:scaleX(0.8560)">33a</span>
<span class="t ll" style="left:511.75px;top:207.95px;font-size:9.63px;transform:scaleX(0.8519)">1762</span>
<span class="t ll" style="left:511.25px;top:224.45px;font-size:9.63px;transform:scaleX(0.9050)">Givisiez</span>
</body>
</html>
